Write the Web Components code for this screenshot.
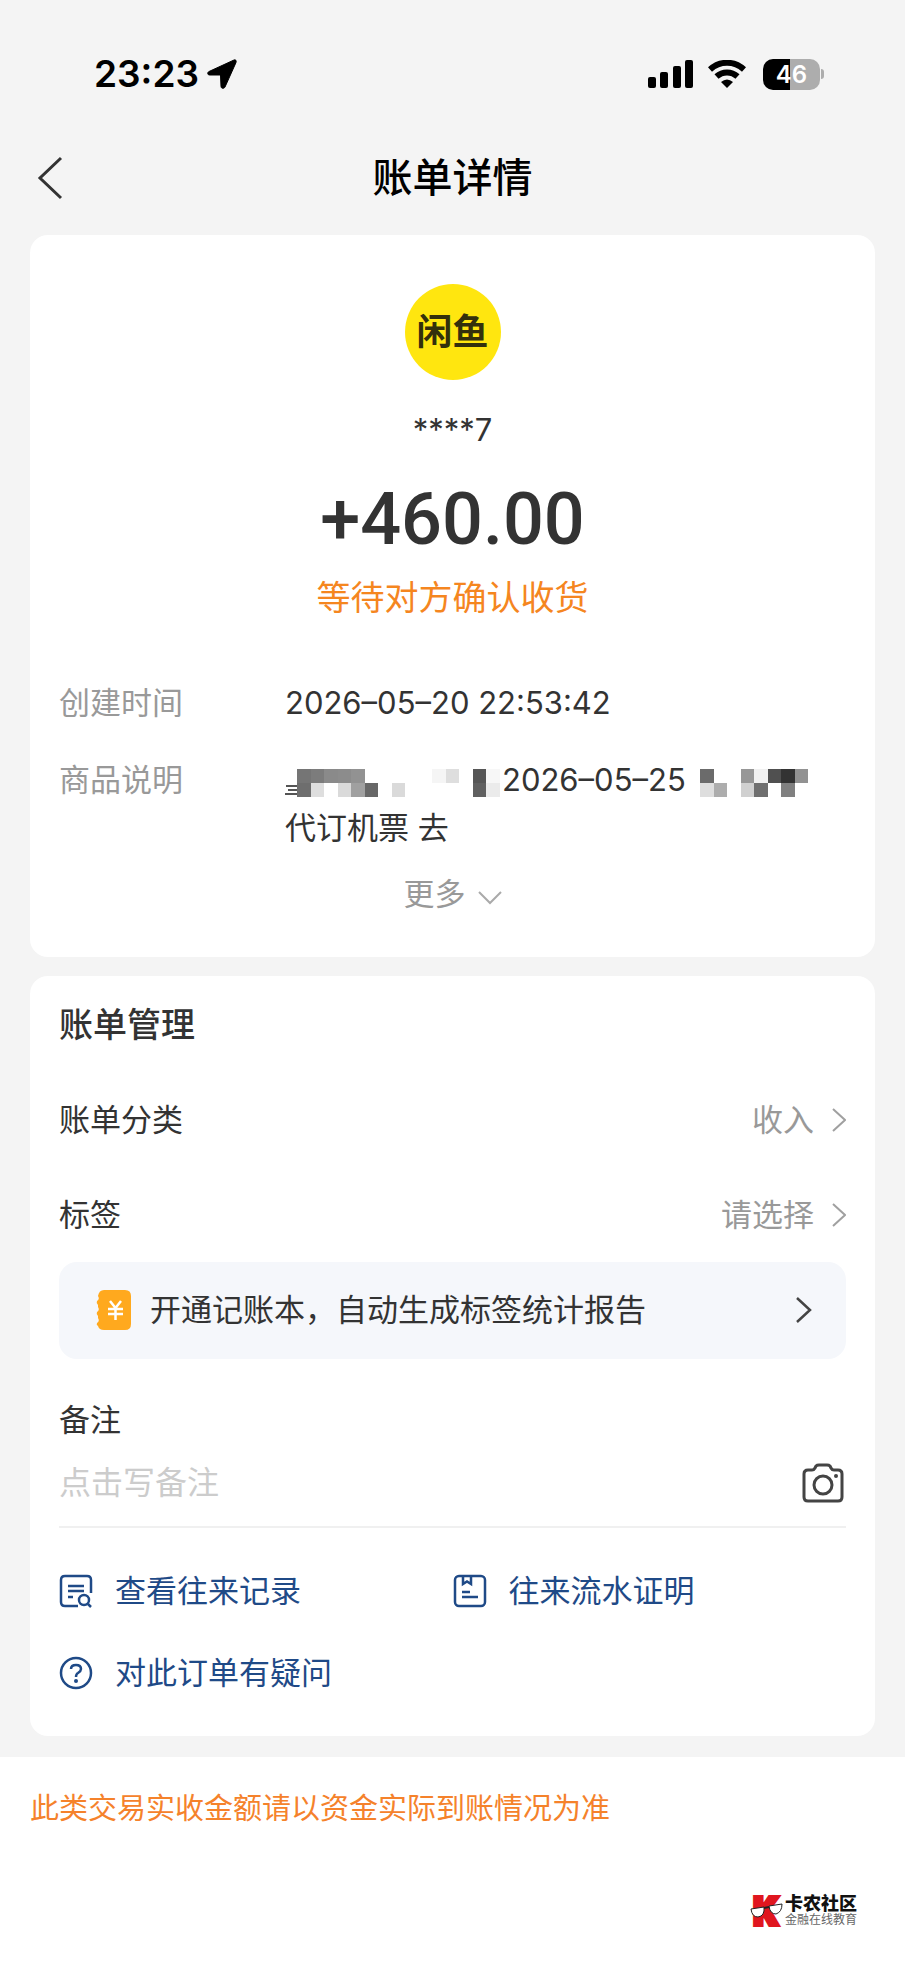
<!DOCTYPE html>
<html lang="zh-CN">
<head>
<meta charset="utf-8">
<meta name="viewport" content="width=device-width, initial-scale=1">
<title>账单详情</title>
<style>
  body {
    margin: 0;
    background: #fff;
    color: #333;
    font-family: Inter, "Noto Sans CJK SC", sans-serif;
    font-size: 31px;
    line-height: 48px;
  }
</style>
</head>
<body>
<bill-page>
  <status-bar time="23:23" battery="46"></status-bar>
  <nav-bar>账单详情</nav-bar>

  <bill-card>
    <payee-summary name="****7" amount="+460.00" status="等待对方确认收货"></payee-summary>
    <detail-row label="创建时间">2026–05–20 22:53:42</detail-row>
    <detail-row label="商品说明"><mosaic-strip kind="name"></mosaic-strip>2026–05–25<mosaic-strip kind="route"></mosaic-strip><br>代订机票 去</detail-row>
    <more-button>更多</more-button>
  </bill-card>

  <bill-card>
    <section-title>账单管理</section-title>
    <setting-row label="账单分类">收入</setting-row>
    <setting-row label="标签">请选择</setting-row>
    <promo-banner>开通记账本，自动生成标签统计报告</promo-banner>
    <note-field label="备注" placeholder="点击写备注"></note-field>
    <action-grid>
      <action-link icon="records">查看往来记录</action-link>
      <action-link icon="proof">往来流水证明</action-link>
      <action-link icon="help">对此订单有疑问</action-link>
    </action-grid>
  </bill-card>
</bill-page>
<page-footer>此类交易实收金额请以资金实际到账情况为准</page-footer>

<script>
  class BaseElement extends HTMLElement {
    connectedCallback() {
      if (this.shadowRoot) return;
      this.attachShadow({ mode: "open" });
      this.shadowRoot.innerHTML = this.render();
    }
  }

  class BillPage extends BaseElement {
    render() {
      return `
        <style>
          :host { display: block; background: #f4f4f4; padding-bottom: 21px; }
          main { display: flex; flex-direction: column; }
        </style>
        <main><slot></slot></main>
      `;
    }
  }

  class StatusBar extends BaseElement {
    render() {
      return `
        <style>
          :host {
            display: flex;
            align-items: center;
            justify-content: space-between;
            padding: 50px 81px 0 94px;
            color: #000;
          }
          .side { display: flex; align-items: center; }
          .time { font-size: 37px; font-weight: 600; margin-right: 8px; }
          .signal { margin-right: 15px; }
          .wifi { margin-right: 17px; }
          .battery {
            width: 57px;
            height: 31px;
            border-radius: 10px;
            background: linear-gradient(to right, #000 47%, #adadad 47%);
            color: #fff;
            font-size: 24px;
            font-weight: 600;
            line-height: 31px;
            text-align: center;
          }
          .cap { width: 3px; height: 10px; margin-left: 1px; border-radius: 0 3px 3px 0; background: #adadad; }
        </style>
        <div class="side">
          <span class="time">${this.getAttribute("time")}</span>
          <svg width="30" height="30" viewBox="0 0 30 30" stroke="#000" stroke-linejoin="round"><path d="M27 1 2 12.500C0 13.600.6 16 2.500 16H13.500L14 27.500C14 29.600 17 30 18 28L29 3.500C29.600 1.500 28.800.5 27 1Z"/></svg>
        </div>
        <div class="side">
          <svg class="signal" width="45" height="28" viewBox="0 0 45 28">
            <rect x="0" y="17" width="8" height="11" rx="2"/>
            <rect x="12" y="12" width="8" height="16" rx="2"/>
            <rect x="25" y="6" width="8" height="22" rx="2"/>
            <rect x="37" y="0" width="8" height="28" rx="2"/>
          </svg>
          <svg class="wifi" width="38" height="28" viewBox="0 0 38 28">
            <path d="M2 9.500C12 .5 26 .5 36 9.500" fill="none" stroke="#000" stroke-width="6"/>
            <path d="M8.500 16.500C14.500 11 23.500 11 29.500 16.500" fill="none" stroke="#000" stroke-width="6"/>
            <path d="M13 22Q19 17 25 22L19 28Z"/>
          </svg>
          <span class="battery">${this.getAttribute("battery")}</span>
          <span class="cap"></span>
        </div>
      `;
    }
  }

  class NavBar extends BaseElement {
    render() {
      return `
        <style>
          :host {
            display: grid;
            grid-template-columns: 1fr auto 1fr;
            align-items: center;
            padding: 50px 36px 27px;
          }
          button { justify-self: start; display: flex; padding: 0; border: 0; background: none; cursor: pointer; }
          h1 { margin: 0; color: #000; font-size: 40px; font-weight: 500; line-height: 60px; }
        </style>
        <button aria-label="返回">
          <svg width="28" height="44" viewBox="0 0 28 44" fill="none" stroke="#333" stroke-width="3"><path d="M25 2 4 22 25 42"/></svg>
        </button>
        <h1><slot></slot></h1>
      `;
    }
  }

  class BillCard extends BaseElement {
    render() {
      return `
        <style>
          :host {
            display: flex;
            flex-direction: column;
            margin: 0 30px;
            padding: 25px 29px 39px;
            border-radius: 18px;
            background: #fff;
          }
          :host(:not(:first-of-type)) { margin-top: 19px; }
        </style>
        <slot></slot>
      `;
    }
  }

  class PayeeSummary extends BaseElement {
    render() {
      return `
        <style>
          :host {
            display: flex;
            flex-direction: column;
            align-items: center;
            padding-top: 24px;
          }
          .logo {
            width: 96px;
            height: 96px;
            border-radius: 50%;
            background: #ffe60f;
            color: #33300c;
            font-size: 36px;
            font-weight: 700;
            line-height: 96px;
            text-align: center;
          }
          .name { margin-top: 26px; }
          .amount { margin-top: 24px; font: 500 72px/84px Roboto, sans-serif; }
          .status { margin-top: 12px; color: #f5861f; font-size: 34px; }
        </style>
        <div class="logo">闲鱼</div>
        <div class="name">${this.getAttribute("name")}</div>
        <div class="amount">${this.getAttribute("amount")}</div>
        <div class="status">${this.getAttribute("status")}</div>
      `;
    }
  }

  class DetailRow extends BaseElement {
    render() {
      return `
        <style>
          :host { display: grid; grid-template-columns: 226px 1fr; margin-top: 29px; }
          :host(:first-of-type) { margin-top: 57px; }
          .label { color: #999; }
          .value { white-space: nowrap; }
        </style>
        <span class="label">${this.getAttribute("label")}</span>
        <span class="value"><slot></slot></span>
      `;
    }
  }

  // column, row, colour of each hidden-text block
  const MOSAICS = {
    name: {
      width: 217,
      start: 12,
      lines: [[1, 16, 11], [3, 20, 9], [0, 24, 12]],
      cells: [
        [0, 0, "#757575"], [1, 0, "#7c7c7c"], [2, 0, "#8a8a8a"], [3, 0, "#8c8c8c"], [4, 0, "#929292"],
        [0, 1, "#6e6e6e"], [1, 1, "#dedede"], [3, 1, "#dadada"], [4, 1, "#a0a0a0"], [5, 1, "#676767"], [7, 1, "#dadada"],
        [10, 0, "#f5f5f5"], [11, 0, "#dedede"],
        [13, 0, "#565656"], [14, 0, "#f7f7f7"], [13, 1, "#606060"], [14, 1, "#ebebeb"],
      ],
    },
    route: {
      width: 108,
      start: 0,
      lines: [],
      cells: [
        [0, 0, "#6b6b6b"], [0, 1, "#dedede"], [1, 1, "#adadad"],
        [3, 0, "#979797"], [4, 0, "#f0f0f0"], [5, 0, "#505050"], [6, 0, "#333333"], [7, 0, "#929292"],
        [3, 1, "#d0d0d0"], [4, 1, "#6f6f6f"], [6, 1, "#808080"],
      ],
    },
  };

  class MosaicStrip extends BaseElement {
    render() {
      const { width, start, lines, cells } = MOSAICS[this.getAttribute("kind")];
      return `
        <style>
          :host { display: inline-block; vertical-align: middle; height: 28px; line-height: 0; }
          :host([kind="route"]) { margin-left: 14px; }
        </style>
        <svg width="${width}" height="28" viewBox="0 0 ${width} 28" shape-rendering="crispEdges" aria-hidden="true">
          ${lines.map(([x, y, w]) => `<rect x="${x}" y="${y}" width="${w}" height="2" fill="#555"/>`).join("")}
          ${cells
            .map(([c, r, fill]) => `<rect x="${start + c * 13.5}" y="${r * 14}" width="13.500" height="14" fill="${fill}"/>`)
            .join("")}
        </svg>
      `;
    }
  }

  class MoreButton extends BaseElement {
    render() {
      return `
        <style>
          :host { display: flex; justify-content: center; margin-top: 18px; }
          button {
            display: flex;
            align-items: center;
            gap: 12px;
            padding: 0;
            border: 0;
            background: none;
            color: #999;
            font: inherit;
            cursor: pointer;
          }
          svg { margin-top: 8px; }
        </style>
        <button>
          <slot></slot>
          <svg width="24" height="14" viewBox="0 0 24 14" fill="none" stroke="#aaa" stroke-width="2"><path d="M1 1 12 12 23 1"/></svg>
        </button>
      `;
    }
  }

  class SectionTitle extends BaseElement {
    render() {
      return `
        <style>
          :host { display: block; }
          h2 { margin: 0; font-size: 34px; font-weight: 500; line-height: 48px; }
        </style>
        <h2><slot></slot></h2>
      `;
    }
  }

  class SettingRow extends BaseElement {
    render() {
      return `
        <style>
          :host { display: block; margin-top: 47px; }
          button {
            display: flex;
            align-items: center;
            width: 100%;
            padding: 0;
            border: 0;
            background: none;
            color: inherit;
            font: inherit;
            cursor: pointer;
          }
          .value { margin-left: auto; margin-right: 17px; color: #999; }
        </style>
        <button>
          <span>${this.getAttribute("label")}</span>
          <span class="value"><slot></slot></span>
          <svg width="15" height="24" viewBox="0 0 15 24" fill="none" stroke="#a0a0a0" stroke-width="2"><path d="M2 1 14 12 2 23"/></svg>
        </button>
      `;
    }
  }

  class PromoBanner extends BaseElement {
    render() {
      return `
        <style>
          :host { display: block; margin-top: 23px; }
          button {
            display: flex;
            align-items: center;
            width: 100%;
            padding: 24px 34px 25px 37px;
            border: 0;
            border-radius: 18px;
            background: #f5f7fb;
            color: inherit;
            font: inherit;
            cursor: pointer;
          }
          .book { margin-right: 19px; }
          .arrow { margin-left: auto; }
        </style>
        <button>
          <svg class="book" width="35" height="40" viewBox="0 0 35 40">
            <path fill="#ffa91e" d="M8 0H29Q35 0 35 6V34Q35 40 29 40H8Q3 40 2 36Q0 35 1 33Q4 31 2 28V26Q0 24 1 22Q4 20 2 17V15Q0 13 1 11Q4 9 2 6Q3 0 8 0Z"/>
            <path fill="none" stroke="#fff" stroke-width="2.500" d="M14 11 19.500 18 25 11M19.500 18V30M12 19H27M12 24H27"/>
          </svg>
          <span><slot></slot></span>
          <svg class="arrow" width="17" height="28" viewBox="0 0 17 28" fill="none" stroke="#444" stroke-width="2.500"><path d="M2 2 15 14 2 26"/></svg>
        </button>
      `;
    }
  }

  class NoteField extends BaseElement {
    render() {
      return `
        <style>
          :host { display: block; margin-top: 37px; border-bottom: 2px solid #f0f0f0; }
          label { display: block; }
          .field { display: flex; align-items: center; padding: 15px 2px 19px 0; }
          input {
            flex: 1;
            min-width: 0;
            height: 48px;
            padding: 0;
            border: 0;
            outline: 0;
            background: none;
            color: inherit;
            font: inherit;
            font-size: 32px;
          }
          input::placeholder { color: #ccc; opacity: 1; }
          button { display: flex; padding: 0; border: 0; background: none; cursor: pointer; }
        </style>
        <label for="note">${this.getAttribute("label")}</label>
        <div class="field">
          <input id="note" type="text" placeholder="${this.getAttribute("placeholder")}">
          <button aria-label="添加图片">
            <svg width="42" height="40" viewBox="0 0 42 40" fill="none" stroke="#444" stroke-width="3" stroke-linejoin="round">
              <path d="M6 7H10Q12 7 13 5L14 3Q15 2 17 2H25Q27 2 28 3L29 5Q30 7 32 7H36Q40 7 40 11V34Q40 38 36 38H6Q2 38 2 34V11Q2 7 6 7Z"/>
              <circle cx="21" cy="22" r="9"/>
              <circle cx="34" cy="13" r="2" fill="#444" stroke="none"/>
            </svg>
          </button>
        </div>
      `;
    }
  }

  class ActionGrid extends BaseElement {
    render() {
      return `
        <style>
          :host { display: grid; grid-template-columns: 1fr 1fr; row-gap: 34px; margin-top: 39px; }
        </style>
        <slot></slot>
      `;
    }
  }

  const ACTION_ICONS = {
    records: `
      <path d="M32 19V6Q32 2 28 2H6Q2 2 2 6V28Q2 32 6 32H19"/>
      <path d="M9 12H25M9 17H25M9 23H14"/>
      <circle cx="25" cy="26" r="5"/>
      <path d="M29 30 32 33"/>`,
    proof: `
      <rect x="2" y="2" width="30" height="30" rx="4"/>
      <path d="M10 2V10L14 7.500 18 10V2M9 18H17M9 23H25"/>`,
    help: `
      <circle cx="17" cy="17" r="15"/>
      <path d="M12 13Q12 9 17 9Q22 9 22 13Q22 15 19 17Q17 18 17 21"/>
      <circle cx="17" cy="25" r="2" fill="#1f4a87" stroke="none"/>`,
  };

  class ActionLink extends BaseElement {
    render() {
      return `
        <style>
          :host { display: block; }
          a { display: flex; align-items: center; gap: 22px; color: #1f4a87; text-decoration: none; }
          svg { flex: none; }
        </style>
        <a href="#">
          <svg width="34" height="34" viewBox="0 0 34 34" fill="none" stroke="#1f4a87" stroke-width="2.500">${ACTION_ICONS[this.getAttribute("icon")]}</svg>
          <span><slot></slot></span>
        </a>
      `;
    }
  }

  class PageFooter extends BaseElement {
    render() {
      return `
        <style>
          :host { display: flex; flex-direction: column; padding: 28px 48px 28px 30px; }
          p { margin: 0; color: #f5822b; font-size: 29px; }
          .brand { display: flex; align-items: center; align-self: flex-end; gap: 1px; margin-top: 53px; }
          .name { color: #111; font-size: 18px; font-weight: 900; line-height: 18px; }
          .slogan { color: #666; font-size: 12px; line-height: 14px; }
        </style>
        <p><slot></slot></p>
        <div class="brand">
          <svg width="34" height="50" viewBox="0 -8 34 50">
            <text x="3" y="31" fill="#e0161f" stroke="#e0161f" stroke-width="4" font-family="Roboto, sans-serif" font-size="38" font-weight="900">K</text>
            <path d="M1 15 14 13Q15 22 8 23Q2 23 1 15ZM19 12 32 10Q32 18 26 20Q20 20 19 12Z" fill="#fff" stroke="#222" stroke-width="1"/>
            <path d="M14 14 19 13" stroke="#222" stroke-width="2"/>
          </svg>
          <div>
            <div class="name">卡农社区</div>
            <div class="slogan">金融在线教育</div>
          </div>
        </div>
      `;
    }
  }

  customElements.define("bill-page", BillPage);
  customElements.define("status-bar", StatusBar);
  customElements.define("nav-bar", NavBar);
  customElements.define("bill-card", BillCard);
  customElements.define("payee-summary", PayeeSummary);
  customElements.define("detail-row", DetailRow);
  customElements.define("mosaic-strip", MosaicStrip);
  customElements.define("more-button", MoreButton);
  customElements.define("section-title", SectionTitle);
  customElements.define("setting-row", SettingRow);
  customElements.define("promo-banner", PromoBanner);
  customElements.define("note-field", NoteField);
  customElements.define("action-grid", ActionGrid);
  customElements.define("action-link", ActionLink);
  customElements.define("page-footer", PageFooter);
</script>
</body>
</html>
